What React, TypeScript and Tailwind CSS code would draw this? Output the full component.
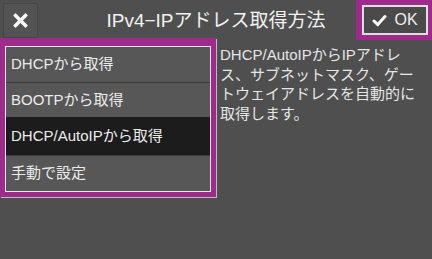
import { useState } from 'react'

const FONT = { fontFamily: '"Liberation Sans", "Noto Sans CJK JP", sans-serif' }

const options = ['DHCPから取得', 'BOOTPから取得', 'DHCP/AutoIPから取得', '手動で設定']
const heights = ['h-[35px]', 'h-[35px]', 'h-[38px]', 'flex-1']

export default function App(): JSX.Element {
  const [selected, setSelected] = useState(2)

  return (
    <div className="w-[432px] h-[259px] bg-[#4f4f4f] text-[#ececec] overflow-hidden" style={FONT}>
      {/* Header */}
      <div className="grid grid-cols-[1fr_auto_1fr] h-[38px]">
        <div className="flex items-start pl-[3px] pt-[3px]">
          <button className="w-[35px] h-[35px] flex items-center justify-center bg-[#535353] border border-[#464646] rounded-[2px]">
            <svg width="15" height="15" viewBox="0 0 15 15" fill="none" stroke="#fafafa" strokeWidth="3.4" strokeLinecap="square">
              <line x1="2.5" y1="2.5" x2="12.5" y2="12.5" />
              <line x1="12.5" y1="2.5" x2="2.5" y2="12.5" />
            </svg>
          </button>
        </div>
        <div className="flex items-center justify-center text-[19px] text-[#f2f2f2] pt-[3px] whitespace-nowrap">
          IPv4−IPアドレス取得方法
        </div>
        <div className="flex justify-end items-start">
          <div className="w-[76px] h-[40px] bg-[#9e2a8b] pl-[6px] pr-[4px] py-[5px] relative z-10">
            <button className="w-full h-full flex items-center justify-center gap-[7px] bg-[#4a4a4a] border-2 border-[#dedede] text-[16px] text-[#f0f0f0]">
              <svg width="15" height="13" viewBox="0 0 15 13" fill="none" stroke="#fafafa" strokeWidth="3" strokeLinecap="round" strokeLinejoin="round">
                <path d="M2 7 L5.8 10.6 L13 2.5" />
              </svg>
              OK
            </button>
          </div>
        </div>
      </div>

      {/* Body */}
      <div className="flex">
        <div className="w-[216px] h-[159px] bg-[#9e2a8b] pt-[8px] px-[5px] pb-[5px] shadow-[1px_1px_0_#bcbcbc]">
          <div className="h-full flex flex-col border border-[#e4e4e4] bg-[#575757]">
            {options.map((label, i) => (
              <button
                key={label}
                onClick={() => setSelected(i)}
                className={
                  'text-left pl-[5px] text-[15px] text-[#ececec] border-t first:border-t-0 ' +
                  heights[i] + ' ' +
                  (i === selected ? 'bg-[#1c1c1c] border-[#1c1c1c]' : 'bg-[#575757] border-[#3a3a3a]')
                }
              >
                {label}
              </button>
            ))}
          </div>
        </div>

        <div className="flex-1 pl-[4px] pt-[7px] text-[15px] leading-[19.5px] text-[#e6e6e6] whitespace-nowrap">
          DHCP/AutoIPからIPアドレ
          <br />
          ス、サブネットマスク、ゲー
          <br />
          トウェイアドレスを自動的に
          <br />
          取得します。
        </div>
      </div>
    </div>
  )
}
